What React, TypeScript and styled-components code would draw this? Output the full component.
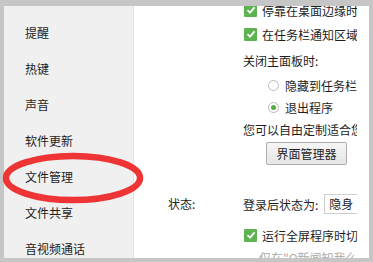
import React from "react";
import styled, { createGlobalStyle } from "styled-components";

const Global = createGlobalStyle`
  html, body { margin: 0; padding: 0; background: #c6c6c6; }
  body { font-family: "Noto Sans CJK SC", "Noto Sans", sans-serif; }
  * { box-sizing: border-box; }
`;

const Frame = styled.div`
  position: relative;
  width: 373px;
  height: 262px;
  background: #c6c6c6;
  padding: 6px 4px 4px 4px;
  overflow: hidden;
`;

const Window = styled.div`
  display: flex;
  width: 100%;
  height: 100%;
  overflow: hidden;
  font-size: 12px;
  color: #1e1e1e;
`;

const Sidebar = styled.nav`
  width: 130px;
  flex: none;
  background: #f0f0f0;
  border-right: 1px solid #e3e3e3;
  padding: 9px 0 0 21px;
  display: flex;
  flex-direction: column;
`;

const NavItem = styled.div`
  height: 36px;
  line-height: 36px;
  white-space: nowrap;
`;

const Content = styled.main`
  flex: 1;
  background: #ffffff;
  padding-right: 12px;
  display: flex;
`;

const Clip = styled.div`
  flex: 1;
  overflow: hidden;
`;

const Scroller = styled.div`
  margin-top: -8px;
  padding-left: 34px;
`;

const Section = styled.section<{ $gap?: number }>`
  display: grid;
  grid-template-columns: 75px 1fr;
  margin-top: ${(p) => p.$gap ?? 0}px;
`;

const SectionLabel = styled.div`
  height: 20px;
  line-height: 20px;
  white-space: nowrap;
`;

const Body = styled.div`
  display: flex;
  flex-direction: column;
  min-width: 0;
`;

const Row = styled.div<{ $h: number; $indent?: number; $muted?: boolean }>`
  height: ${(p) => p.$h}px;
  display: flex;
  align-items: center;
  gap: 5px;
  padding-left: ${(p) => p.$indent ?? 0}px;
  white-space: nowrap;
  color: ${(p) => (p.$muted ? "#a9a9a9" : "inherit")};
`;

const Box = styled.span`
  width: 13px;
  height: 13px;
  flex: none;
  margin-left: 1px;
  background: #5cb34f;
  border-radius: 1px;
  display: inline-flex;
  align-items: center;
  justify-content: center;
`;

const Radio = styled.span<{ $on?: boolean }>`
  width: 11px;
  height: 11px;
  flex: none;
  border-radius: 50%;
  border: 1px solid #b9b9b9;
  background: #fff;
  display: inline-flex;
  align-items: center;
  justify-content: center;
  margin-right: 1px;
  &::after {
    content: "";
    width: 5px;
    height: 5px;
    border-radius: 50%;
    background: ${(p) => (p.$on ? "#4fae45" : "transparent")};
  }
`;

const Button = styled.button`
  margin: 2px 0 0 23px;
  width: 81px;
  height: 23px;
  border: 1px solid #adadad;
  border-radius: 2px;
  background: linear-gradient(#f6f6f6, #e6e6e6);
  font-family: inherit;
  font-size: 12px;
  color: #1e1e1e;
  padding: 0;
  align-self: flex-start;
`;

const Select = styled.div`
  margin-left: 1px;
  height: 20px;
  width: 60px;
  flex: none;
  border: 1px solid #cfcfcf;
  padding-left: 4px;
  line-height: 18px;
  background: #fff;
`;

const Ellipse = styled.svg`
  position: absolute;
  left: 0;
  top: 149px;
  pointer-events: none;
`;

const Check = () => (
  <Box>
    <svg width="10" height="10" viewBox="0 0 10 10">
      <path d="M1.5 5.2 L4 7.6 L8.6 2.4" fill="none" stroke="#fff" strokeWidth="1.8" />
    </svg>
  </Box>
);

const nav = ["提醒", "热键", "声音", "软件更新", "文件管理", "文件共享", "音视频通话"];

export default function App() {
  return (
    <>
      <Global />
      <Frame>
        <Window>
          <Sidebar>
            {nav.map((n) => (
              <NavItem key={n}>{n}</NavItem>
            ))}
          </Sidebar>
          <Content>
            <Clip>
              <Scroller>
                <Section>
                  <div />
                  <Body>
                    <Row $h={24}>
                      <Check />
                      停靠在桌面边缘时自动隐藏
                    </Row>
                    <Row $h={24}>
                      <Check />
                      在任务栏通知区域显示QQ图标
                    </Row>
                    <Row $h={28}>关闭主面板时:</Row>
                    <Row $h={22} $indent={25}>
                      <Radio />
                      隐藏到任务栏通知区域
                    </Row>
                    <Row $h={22} $indent={25}>
                      <Radio $on />
                      退出程序
                    </Row>
                    <Row $h={22}>您可以自由定制适合您的界面</Row>
                    <Button>界面管理器</Button>
                  </Body>
                </Section>
                <Section $gap={29}>
                  <SectionLabel>状态:</SectionLabel>
                  <Body>
                    <Row $h={20}>
                      登录后状态为:
                      <Select>隐身</Select>
                    </Row>
                    <Row $h={33} style={{ paddingTop: 9 }}>
                      <Check />
                      运行全屏程序时切换为忙碌
                    </Row>
                    <Row $h={20} $indent={16} $muted>
                      仅在"Q新闻知我么
                    </Row>
                  </Body>
                </Section>
              </Scroller>
            </Clip>
          </Content>
        </Window>
        <Ellipse width="150" height="62" viewBox="0 0 150 62">
          <ellipse cx="73" cy="29" rx="67" ry="22" fill="none" stroke="#ee3434" strokeWidth="6.5" />
        </Ellipse>
      </Frame>
    </>
  );
}
